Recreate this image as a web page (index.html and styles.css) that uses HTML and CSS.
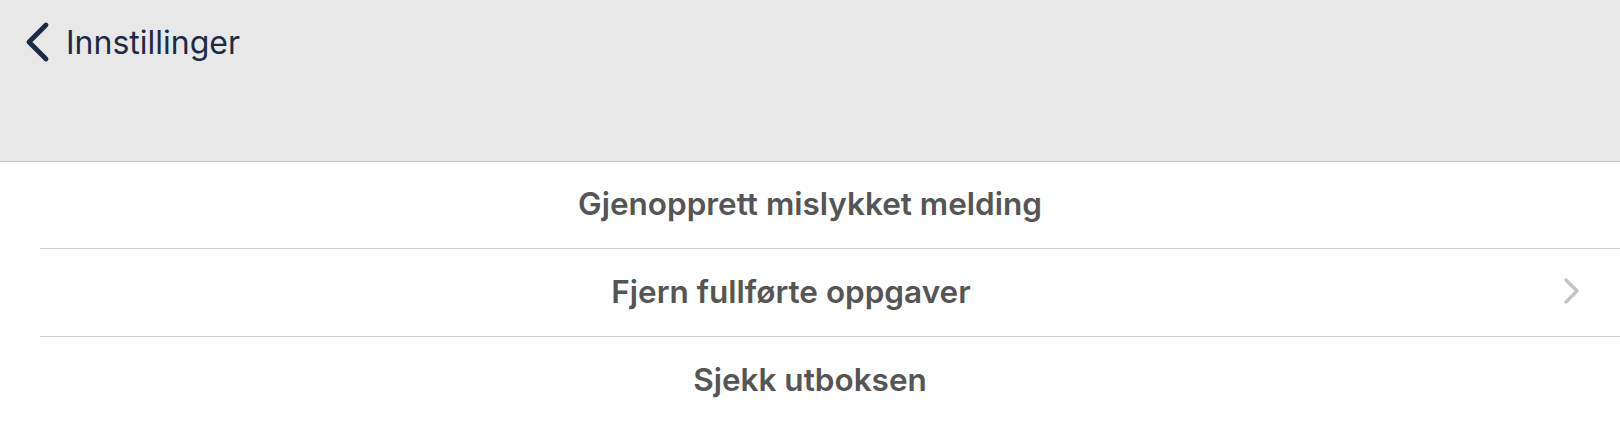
FILE: index.html
```html
<!DOCTYPE html>
<html lang="no">
<head>
<meta charset="utf-8">
<link rel="stylesheet" href="styles.css">
</head>
<body>
<header class="nav">
  <div class="back">
    <svg class="back-icon" width="28" height="42" viewBox="0 0 28 42"><path d="M23 4 L6 21 L23 38" fill="none" stroke="#1c2b45" stroke-width="4.8" stroke-linecap="round" stroke-linejoin="round"/></svg>
    <span class="back-label">Innstillinger</span>
  </div>
</header>
<ul class="list">
  <li class="row first"><span class="label">Gjenopprett mislykket melding</span></li>
  <li class="row"><span class="label shifted">Fjern fullførte oppgaver</span>
    <svg class="chev" width="18" height="28" viewBox="0 0 18 28"><path d="M4 3 L15 14 L4 25" fill="none" stroke="#c4c4c6" stroke-width="3.4" stroke-linecap="round" stroke-linejoin="round"/></svg>
  </li>
  <li class="row last"><span class="label">Sjekk utboksen</span></li>
</ul>
</body>
</html>
```
FILE: styles.css
```css
html, body { margin: 0; padding: 0; background: #ffffff; }
body { font-family: Inter, "Noto Sans", sans-serif; width: 1620px; height: 424px; overflow: hidden; }
.nav {
  height: 161px;
  background: #e8e8e8;
  border-bottom: 1px solid #c8c8c8;
}
.back {
  display: flex;
  align-items: center;
  padding: 21px 0 0 23px;
  gap: 15px;
  height: 42px;
}
.back-label {
  font-size: 32px;
  color: #1c2b45;
  font-weight: 400;
  line-height: 40px;
  margin-top: 1px;
}
.list { list-style: none; margin: 0; padding: 0 0 0 40px; }
.row {
  position: relative;
  height: 88px;
  border-bottom: 1px solid #cfcfcf;
  display: flex;
  align-items: center;
  justify-content: center;
  box-sizing: border-box;
  padding-bottom: 3px;
}
.row.first { height: 87px; }
.row.last { border-bottom: none; }
.label {
  font-size: 31.5px;
  font-weight: 600;
  color: #555555;
  margin-left: -40px;
}
.label.shifted { margin-left: -78px; }
.chev { position: absolute; right: 40px; top: 28px; }
```
